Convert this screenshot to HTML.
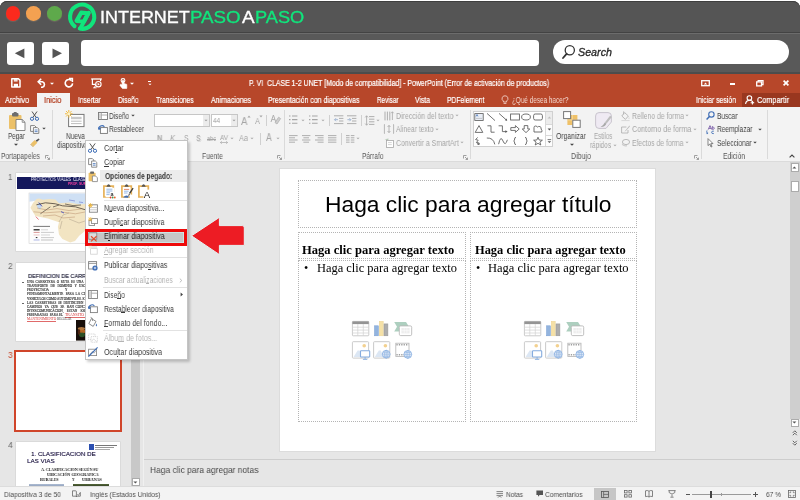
<!DOCTYPE html>
<html>
<head>
<meta charset="utf-8">
<style>
*{box-sizing:border-box;margin:0;padding:0}
html,body{width:800px;height:500px;overflow:hidden;background:#fff;font-family:"Liberation Sans",sans-serif;}
.a{position:absolute}
#root{position:absolute;left:0;top:0;width:800px;height:500px;overflow:hidden;background:#fff}
.t{position:absolute;white-space:pre;line-height:1;transform-origin:0 50%;will-change:transform}
svg{overflow:visible}
</style>
</head>
<body>
<div id="root">
<div class="a" style="left:0px;top:0px;width:800px;height:74px;background:#595959;border-radius:7px 7px 0 0;border-top:1px solid #3f3f3f;top:1px"></div>
<div class="a" style="left:0px;top:1px;width:800px;height:31px;background:#555555;border-radius:7px 7px 0 0;border-top:1px solid #3f3f3f"></div>
<div class="a" style="left:0px;top:32px;width:800px;height:1px;background:#434343;"></div>
<div class="a" style="left:0px;top:33px;width:800px;height:1px;background:#6c6c6c;"></div>
<div class="a" style="left:0px;top:72.4px;width:800px;height:1.6px;background:#4c4c4c;"></div>
<div class="a" style="left:5.500000000000001px;top:6.1000000000000005px;width:14.6px;height:14.6px;border-radius:50%;background:#fb2a1d;box-shadow:0 1px 1px rgba(120,110,100,.7)"></div>
<div class="a" style="left:26.2px;top:6.1000000000000005px;width:14.6px;height:14.6px;border-radius:50%;background:#f4a151;box-shadow:0 1px 1px rgba(120,110,100,.7)"></div>
<div class="a" style="left:47.300000000000004px;top:6.1000000000000005px;width:14.6px;height:14.6px;border-radius:50%;background:#5ea94b;box-shadow:0 1px 1px rgba(120,110,100,.7)"></div>
<svg class="a" style="left:67px;top:2px" width="30" height="30" viewBox="0 0 30 30"><path d="M7.5 24.1 A12.1 12.1 0 1 1 12.8 26.6" fill="none" stroke="#10e57c" stroke-width="4.1" stroke-linecap="round"/>
<path d="M14.2 10.7 L21.3 11.3 L16.9 19.5 L9.6 18.9 Z" fill="none" stroke="#10e57c" stroke-width="4.2" stroke-linejoin="round"/>
<path d="M21.8 10.8 L13.4 26.2" fill="none" stroke="#10e57c" stroke-width="3.9" stroke-linecap="round"/></svg>
<div class="t" style="left:100.20px;top:9.93px;font-size:15.8px;color:#ffffff;font-family:'Liberation Sans',sans-serif;transform:scaleX(1.1367);-webkit-text-stroke:0.32px currentColor;">INTERNET</div>
<div class="t" style="left:190.40px;top:9.93px;font-size:15.8px;color:#10e57c;font-family:'Liberation Sans',sans-serif;transform:scaleX(1.1841);-webkit-text-stroke:0.32px currentColor;">PASO</div>
<div class="t" style="left:241.60px;top:9.93px;font-size:15.8px;color:#ffffff;font-family:'Liberation Sans',sans-serif;transform:scaleX(1.1955);-webkit-text-stroke:0.32px currentColor;">A</div>
<div class="t" style="left:255.20px;top:9.93px;font-size:15.8px;color:#10e57c;font-family:'Liberation Sans',sans-serif;transform:scaleX(1.1513);-webkit-text-stroke:0.32px currentColor;">PASO</div>
<div class="a" style="left:7.3px;top:41.5px;width:27.2px;height:23.6px;background:#fff;border-radius:3px"></div>
<div class="a" style="left:42.2px;top:41.5px;width:27.2px;height:23.6px;background:#fff;border-radius:3px"></div>
<svg class="a" style="left:7px;top:41px" width="63" height="25" viewBox="0 0 63 25"><path d="M7.8 12.2 L17.4 7.6 L17.4 17.2 Z" fill="#555"/><path d="M45.5 7.6 L45.5 17.2 L55 12.2 Z" fill="#555"/></svg>
<div class="a" style="left:80.6px;top:39.6px;width:458.8px;height:26px;background:#fff;border-radius:4px"></div>
<div class="a" style="left:552.6px;top:40.3px;width:236.6px;height:23.5px;background:#fff;border-radius:12px"></div>
<svg class="a" style="left:561px;top:44px" width="16" height="16" viewBox="0 0 16 16"><circle cx="8.8" cy="6.2" r="4.6" fill="none" stroke="#333" stroke-width="1.3"/><path d="M5.6 9.8 L2 14" stroke="#333" stroke-width="1.8" stroke-linecap="round"/></svg>
<div class="t" style="left:578.00px;top:47.11px;font-size:10.5px;color:#2a2a2a;font-family:'Liberation Sans',sans-serif;font-style:italic;transform:scaleX(1.0219);-webkit-text-stroke:0.3px #2a2a2a;">Search</div>
<div class="a" style="left:0px;top:74px;width:800px;height:33px;background:#b7472a;"></div>
<div class="a" style="left:0px;top:107px;width:800px;height:54px;background:#f3f3f3;"></div>
<div class="a" style="left:0px;top:161px;width:800px;height:1px;background:#dbdbdb;"></div>
<div class="a" style="left:0px;top:162px;width:800px;height:326px;background:#e6e6e6;"></div>
<div class="a" style="left:0px;top:488px;width:800px;height:12px;background:#f3f3f3;"></div>
<svg class="a" style="left:11.2px;top:78px" width="10" height="10" viewBox="0 0 10 10"><path d="M0.8 0.8 H7.4 L9 2.4 V9 H0.8 Z" fill="none" stroke="#ffffff" stroke-width="1.5" stroke-linejoin="round"/><rect x="2.8" y="0.8" width="3.8" height="2.8" fill="#ffffff" opacity="0.85"/><rect x="2.8" y="5.8" width="4.2" height="3.2" fill="#ffffff"/></svg>
<svg class="a" style="left:36.6px;top:78.4px" width="10" height="10" viewBox="0 0 10 10"><path d="M1.2 3.8 H5.4 A2.8 2.8 0 0 1 5.4 9.2 H4" fill="none" stroke="#ffffff" stroke-width="1.6"/><path d="M4.2 0.8 L1.2 3.8 L4.2 6.8" fill="none" stroke="#ffffff" stroke-width="1.6"/></svg>
<svg class="a" style="left:49px;top:81.6px" width="6" height="4" viewBox="0 0 6 4"><path d="M1.0199999999999998 0.8 L4.98 0.8 L3 2.7800000000000002 Z" fill="#ffffff"/></svg>
<svg class="a" style="left:63.6px;top:78px" width="10" height="10" viewBox="0 0 10 10"><path d="M7.6 2.6 A3.7 3.7 0 1 0 8.6 5.4" fill="none" stroke="#ffffff" stroke-width="1.6"/><path d="M5 0.6 H8.4 V4" fill="none" stroke="#ffffff" stroke-width="1.5"/></svg>
<svg class="a" style="left:91px;top:78px" width="11" height="10" viewBox="0 0 11 10"><path d="M0.2 1 H10.8" stroke="#ffffff" stroke-width="1.3"/><path d="M1.4 1 V6.4 H5 M9.6 1 V3" fill="none" stroke="#ffffff" stroke-width="1.2"/><circle cx="7.4" cy="6.2" r="2.7" fill="#b7472a" stroke="#ffffff" stroke-width="1.1"/><path d="M6.6 4.8 L8.8 6.2 L6.6 7.6 Z" fill="#ffffff"/><path d="M3.4 9.8 L4.8 6.6 M2.2 9.8 H5.6" stroke="#ffffff" stroke-width="1" fill="none"/></svg>
<svg class="a" style="left:119px;top:77.6px" width="9" height="11" viewBox="0 0 9 11"><circle cx="4" cy="2.5" r="1.9" fill="none" stroke="#ffffff" stroke-width="1.1"/><path d="M3.1 2.6 V7 L1.6 6.2 L0.8 7.2 L3.4 10.4 H7.8 V6.4 L4.9 5.4 V2.6 Z" fill="#ffffff" stroke="#ffffff" stroke-width="0.6" stroke-linejoin="round"/></svg>
<svg class="a" style="left:129px;top:81.6px" width="6" height="4" viewBox="0 0 6 4"><path d="M1.0199999999999998 0.8 L4.98 0.8 L3 2.7800000000000002 Z" fill="#ffffff"/></svg>
<div class="a" style="left:148px;top:80.8px;width:3.2px;height:1.1px;background:#ffffff;"></div>
<svg class="a" style="left:146.6px;top:82.6px" width="6" height="4" viewBox="0 0 6 4"><path d="M1.46 0.8 L4.54 0.8 L3 2.34 Z" fill="#ffffff"/></svg>
<div class="t" style="left:249.00px;top:80.22px;font-size:8.2px;color:#ffffff;font-family:'Liberation Sans',sans-serif;transform:scaleX(0.8460);-webkit-text-stroke:0.2px currentColor;">P. VI  CLASE 1-2 UNET [Modo de compatibilidad] - PowerPoint (Error de activación de productos)</div>
<svg class="a" style="left:701px;top:79.8px" width="9" height="6.4" viewBox="0 0 9 6.4"><rect x="0.7" y="0.7" width="7.6" height="5" fill="none" stroke="#ffffff" stroke-width="1.3"/><path d="M2.8 4.4 L4.5 2.4 L6.2 4.4 Z" fill="#ffffff"/></svg>
<div class="a" style="left:729.8px;top:83px;width:5.4px;height:1.7px;background:#ffffff;"></div>
<svg class="a" style="left:756px;top:79.8px" width="8" height="6.6" viewBox="0 0 8 6.6"><rect x="0.7" y="1.9" width="4.8" height="4" fill="none" stroke="#ffffff" stroke-width="1.3"/><path d="M2.2 1.8 V0.7 H7 V4.6 H5.6" fill="none" stroke="#ffffff" stroke-width="1.3"/></svg>
<svg class="a" style="left:783.4px;top:80.2px" width="6" height="6" viewBox="0 0 6 6"><path d="M0.6 0.6 L5.4 5.4 M5.4 0.6 L0.6 5.4" stroke="#ffffff" stroke-width="1.7"/></svg>
<div class="a" style="left:37px;top:93px;width:33px;height:14.2px;background:#f3f3f3;"></div>
<div class="t" style="left:5.00px;top:96.43px;font-size:8.8px;color:#ffffff;font-family:'Liberation Sans',sans-serif;transform:scaleX(0.8179);-webkit-text-stroke:0.22px currentColor;">Archivo</div>
<div class="t" style="left:44.40px;top:96.43px;font-size:8.8px;color:#b23a1b;font-family:'Liberation Sans',sans-serif;transform:scaleX(0.8372);-webkit-text-stroke:0.22px currentColor;">Inicio</div>
<div class="t" style="left:78.40px;top:96.43px;font-size:8.8px;color:#ffffff;font-family:'Liberation Sans',sans-serif;transform:scaleX(0.7575);-webkit-text-stroke:0.22px currentColor;">Insertar</div>
<div class="t" style="left:118.40px;top:96.43px;font-size:8.8px;color:#ffffff;font-family:'Liberation Sans',sans-serif;transform:scaleX(0.7520);-webkit-text-stroke:0.22px currentColor;">Diseño</div>
<div class="t" style="left:156.40px;top:96.43px;font-size:8.8px;color:#ffffff;font-family:'Liberation Sans',sans-serif;transform:scaleX(0.7586);-webkit-text-stroke:0.22px currentColor;">Transiciones</div>
<div class="t" style="left:211.00px;top:96.43px;font-size:8.8px;color:#ffffff;font-family:'Liberation Sans',sans-serif;transform:scaleX(0.7939);-webkit-text-stroke:0.22px currentColor;">Animaciones</div>
<div class="t" style="left:268.00px;top:96.43px;font-size:8.8px;color:#ffffff;font-family:'Liberation Sans',sans-serif;transform:scaleX(0.7868);-webkit-text-stroke:0.22px currentColor;">Presentación con diapositivas</div>
<div class="t" style="left:376.60px;top:96.43px;font-size:8.8px;color:#ffffff;font-family:'Liberation Sans',sans-serif;transform:scaleX(0.7174);-webkit-text-stroke:0.22px currentColor;">Revisar</div>
<div class="t" style="left:415.00px;top:96.43px;font-size:8.8px;color:#ffffff;font-family:'Liberation Sans',sans-serif;transform:scaleX(0.7730);-webkit-text-stroke:0.22px currentColor;">Vista</div>
<div class="t" style="left:447.00px;top:96.43px;font-size:8.8px;color:#ffffff;font-family:'Liberation Sans',sans-serif;transform:scaleX(0.7647);-webkit-text-stroke:0.22px currentColor;">PDFelement</div>
<svg class="a" style="left:501px;top:95px" width="8" height="10" viewBox="0 0 8 10"><path d="M4 0.8 A2.8 2.8 0 0 1 5.6 6 V7 H2.4 V6 A2.8 2.8 0 0 1 4 0.8 Z M2.6 8.4 H5.4" fill="none" stroke="#f0cfc6" stroke-width="0.9"/></svg>
<div class="t" style="left:511.60px;top:96.43px;font-size:8.8px;color:#f3d6cd;font-family:'Liberation Sans',sans-serif;transform:scaleX(0.7251);">¿Qué desea hacer?</div>
<div class="t" style="left:696.00px;top:96.43px;font-size:8.8px;color:#ffffff;font-family:'Liberation Sans',sans-serif;transform:scaleX(0.7789);-webkit-text-stroke:0.22px currentColor;">Iniciar sesión</div>
<div class="a" style="left:742px;top:93px;width:58px;height:13.6px;background:#99371f;"></div>
<svg class="a" style="left:745px;top:95px" width="10" height="10" viewBox="0 0 10 10"><circle cx="4.4" cy="3" r="2.3" fill="none" stroke="#ffffff" stroke-width="1.1"/><path d="M0.6 9 A3.9 3.9 0 0 1 8.2 8" fill="none" stroke="#ffffff" stroke-width="1.1"/><path d="M7.4 6 V9.6 M5.6 7.8 H9.2" stroke="#ffffff" stroke-width="1.1"/></svg>
<div class="t" style="left:757.00px;top:96.43px;font-size:8.8px;color:#ffffff;font-family:'Liberation Sans',sans-serif;transform:scaleX(0.8284);-webkit-text-stroke:0.22px currentColor;">Compartir</div>
<svg class="a" style="left:8px;top:112px" width="18" height="19" viewBox="0 0 18 19"><rect x="1" y="3" width="12.5" height="14" rx="1" fill="#ecc169"/><rect x="4" y="1" width="6.5" height="3.6" rx="1" fill="#6d6d6d"/><rect x="5.6" y="0" width="3.2" height="2" rx="0.8" fill="#6d6d6d"/>
<path d="M8 7.5 H14.2 L17 10.3 V18.5 H8 Z" fill="#fff" stroke="#7a7a7a" stroke-width="0.9"/><path d="M14.2 7.5 V10.3 H17" fill="none" stroke="#7a7a7a" stroke-width="0.8"/></svg>
<div class="t" style="left:7.60px;top:132.23px;font-size:8.6px;color:#444444;font-family:'Liberation Sans',sans-serif;transform:scaleX(0.7320);">Pegar</div>
<svg class="a" style="left:13px;top:142.6px" width="6" height="4" viewBox="0 0 6 4"><path d="M1.0199999999999998 0.8 L4.98 0.8 L3 2.7800000000000002 Z" fill="#444444"/></svg>
<svg class="a" style="left:30px;top:111px" width="9" height="10" viewBox="0 0 9 10"><path d="M2 0.5 L6.2 6.6 M7 0.5 L2.8 6.6" stroke="#555" stroke-width="1" fill="none"/><circle cx="2" cy="7.8" r="1.6" fill="none" stroke="#3e6db5" stroke-width="1"/><circle cx="7" cy="7.8" r="1.6" fill="none" stroke="#3e6db5" stroke-width="1"/></svg>
<svg class="a" style="left:30px;top:125px" width="10" height="9" viewBox="0 0 10 9"><path d="M0.6 0.6 H4.6 L6 2 V6.4 H0.6 Z" fill="#fff" stroke="#777" stroke-width="0.9"/><path d="M3.4 2.6 H7.4 L8.8 4 V8.4 H3.4 Z" fill="#fff" stroke="#777" stroke-width="0.9"/><path d="M4.6 5 H7.6 M4.6 6.6 H7.6" stroke="#3e6db5" stroke-width="0.8"/></svg>
<svg class="a" style="left:41.4px;top:127.4px" width="6" height="4" viewBox="0 0 6 4"><path d="M1.2399999999999998 0.8 L4.76 0.8 L3 2.5600000000000005 Z" fill="#444444"/></svg>
<svg class="a" style="left:30px;top:138px" width="10" height="9" viewBox="0 0 10 9"><path d="M5.6 2.6 L8.6 0.4 L9.6 1.6 L6.8 4 Z" fill="#555"/><path d="M1 5.4 L4.8 2 L7.4 4.8 L3.6 8.4 Z" fill="#ecc169"/><path d="M0.6 6 L3.2 8.8" stroke="#c99a3c" stroke-width="1"/></svg>
<div class="t" style="left:1.00px;top:152.23px;font-size:8.6px;color:#5a5a5a;font-family:'Liberation Sans',sans-serif;transform:scaleX(0.7695);">Portapapeles</div>
<svg class="a" style="left:44.9px;top:154.5px" width="5" height="5" viewBox="0 0 5 5"><path d="M0.5 3.5 V0.5 H3.5" fill="none" stroke="#8a8a8a" stroke-width="0.8"/><path d="M2 2 L4.5 4.5 M4.5 2.6 V4.5 H2.6" fill="none" stroke="#8a8a8a" stroke-width="0.8"/></svg>
<div class="a" style="left:52px;top:110px;width:1px;height:49px;background:#dadada;"></div>
<svg class="a" style="left:65px;top:110px" width="20" height="18" viewBox="0 0 20 18"><rect x="3.6" y="4.4" width="15.4" height="12.2" fill="#fff" stroke="#777" stroke-width="1"/><rect x="6" y="6.8" width="10.6" height="2.4" fill="#c9c9c9"/><path d="M6 11.2 H16.6 M6 13.6 H16.6" stroke="#b5b5b5" stroke-width="0.9"/>
<path d="M3.8 0 V7.6 M0 3.8 H7.6 M1.1 1.1 L6.5 6.5 M6.5 1.1 L1.1 6.5" stroke="#efb73e" stroke-width="1"/><circle cx="3.8" cy="3.8" r="1.5" fill="#fff3c4"/></svg>
<div class="t" style="left:66.00px;top:132.23px;font-size:8.6px;color:#444444;font-family:'Liberation Sans',sans-serif;transform:scaleX(0.7643);">Nueva</div>
<div class="t" style="left:56.60px;top:141.03px;font-size:8.6px;color:#444444;font-family:'Liberation Sans',sans-serif;transform:scaleX(0.7643);">diapositiva</div>
<svg class="a" style="left:97.6px;top:112px" width="10" height="8" viewBox="0 0 10 8"><rect x="0.5" y="0.5" width="9" height="7" fill="#fff" stroke="#777" stroke-width="0.9"/><path d="M3.4 0.5 V7.5 M3.4 3 H9.5" stroke="#999" stroke-width="0.8"/><rect x="1.2" y="1.4" width="1.6" height="5.2" fill="#c9c9c9"/></svg>
<div class="t" style="left:109.00px;top:111.83px;font-size:8.6px;color:#444444;font-family:'Liberation Sans',sans-serif;transform:scaleX(0.7471);">Diseño</div>
<svg class="a" style="left:129.6px;top:114.4px" width="6" height="4" viewBox="0 0 6 4"><path d="M1.2399999999999998 0.8 L4.76 0.8 L3 2.5600000000000005 Z" fill="#444444"/></svg>
<svg class="a" style="left:97.6px;top:125px" width="10" height="9" viewBox="0 0 10 9"><rect x="2.4" y="2.6" width="7" height="5.8" fill="#fff" stroke="#777" stroke-width="0.9"/><path d="M0.8 4.4 A3.2 3.2 0 0 1 6.4 1.8" fill="none" stroke="#3e6db5" stroke-width="1.1"/><path d="M0 2.2 L0.8 5 L3.4 3.8 Z" fill="#3e6db5"/></svg>
<div class="t" style="left:109.00px;top:125.43px;font-size:8.6px;color:#444444;font-family:'Liberation Sans',sans-serif;transform:scaleX(0.7627);">Restablecer</div>
<div class="a" style="left:153.6px;top:114px;width:56.6px;height:13.4px;background:#fff;border:1px solid #c6c6c6"></div>
<div class="a" style="left:203.4px;top:115px;width:5.8px;height:11.4px;background:#ececec;"></div>
<svg class="a" style="left:203.4px;top:118.8px" width="6" height="4" viewBox="0 0 6 4"><path d="M1.46 0.8 L4.54 0.8 L3 2.34 Z" fill="#999"/></svg>
<div class="a" style="left:211px;top:114px;width:26.8px;height:13.4px;background:#fff;border:1px solid #c6c6c6"></div>
<div class="a" style="left:230.6px;top:115px;width:6.2px;height:11.4px;background:#ececec;"></div>
<svg class="a" style="left:230.8px;top:118.8px" width="6" height="4" viewBox="0 0 6 4"><path d="M1.46 0.8 L4.54 0.8 L3 2.34 Z" fill="#999"/></svg>
<div class="t" style="left:213.20px;top:116.91px;font-size:7.6px;color:#9a9a9a;font-family:'Liberation Sans',sans-serif;transform:scaleX(0.8280);">44</div>
<div class="t" style="left:241.00px;top:115.51px;font-size:10.5px;color:#a6a6a6;font-family:'Liberation Sans',sans-serif;transform:scaleX(0.9138);">A</div>
<svg class="a" style="left:247px;top:115px" width="4" height="3" viewBox="0 0 4 3"><path d="M0.4 2.6 L2 0.6 L3.6 2.6 Z" fill="#a6a6a6"/></svg>
<div class="t" style="left:255.00px;top:116.84px;font-size:9px;color:#a6a6a6;font-family:'Liberation Sans',sans-serif;transform:scaleX(0.8329);">A</div>
<svg class="a" style="left:259.4px;top:115.4px" width="4" height="3" viewBox="0 0 4 3"><path d="M0.4 0.6 L2 2.6 L3.6 0.6 Z" fill="#a6a6a6"/></svg>
<div class="a" style="left:266px;top:115px;width:1px;height:11px;background:#d0d0d0;"></div>
<svg class="a" style="left:270px;top:114px" width="11" height="11" viewBox="0 0 11 11"><path d="M3.4 1 L1 8 M3.4 1 L5.8 8 M1.8 5.6 H5" stroke="#b0b0b0" stroke-width="1" fill="none"/><path d="M5 8.6 L8.6 3.2 L10.6 4.6 L7 10 Z" fill="#cfcfcf" stroke="#aaa" stroke-width="0.7"/></svg>
<div class="t" style="left:157.00px;top:134.43px;font-size:8.6px;color:#a6a6a6;font-family:'Liberation Sans',sans-serif;font-weight:bold;transform:scaleX(0.8695);">N</div>
<div class="t" style="left:170.00px;top:134.43px;font-size:8.6px;color:#a6a6a6;font-family:'Liberation Sans',sans-serif;font-style:italic;transform:scaleX(0.8716);">K</div>
<div class="t" style="left:183.60px;top:134.43px;font-size:8.6px;color:#a6a6a6;font-family:'Liberation Sans',sans-serif;transform:scaleX(0.7670);">S</div>
<div class="a" style="left:183.4px;top:143px;width:5px;height:0.8px;background:#a6a6a6;"></div>
<div class="t" style="left:196.00px;top:134.43px;font-size:8.6px;color:#a6a6a6;font-family:'Liberation Sans',sans-serif;transform:scaleX(0.8019);text-shadow:1px 1px 0 #d5d5d5">S</div>
<div class="t" style="left:207.00px;top:135.21px;font-size:7.4px;color:#a6a6a6;font-family:'Liberation Sans',sans-serif;transform:scaleX(0.7543);">abc</div>
<div class="a" style="left:207px;top:139.2px;width:9px;height:0.7px;background:#a6a6a6;"></div>
<div class="t" style="left:220.00px;top:133.71px;font-size:7.6px;color:#a6a6a6;font-family:'Liberation Sans',sans-serif;transform:scaleX(0.8355);">AV</div>
<svg class="a" style="left:220px;top:141.4px" width="8" height="3" viewBox="0 0 8 3"><path d="M0.4 1.5 H7.6 M1.8 0.2 L0.4 1.5 L1.8 2.8 M6.2 0.2 L7.6 1.5 L6.2 2.8" stroke="#a6a6a6" stroke-width="0.7" fill="none"/></svg>
<svg class="a" style="left:229.4px;top:137px" width="6" height="4" viewBox="0 0 6 4"><path d="M1.46 0.8 L4.54 0.8 L3 2.34 Z" fill="#a6a6a6"/></svg>
<div class="t" style="left:239.00px;top:134.43px;font-size:8.6px;color:#a6a6a6;font-family:'Liberation Sans',sans-serif;transform:scaleX(0.8556);">Aa</div>
<svg class="a" style="left:249px;top:137px" width="6" height="4" viewBox="0 0 6 4"><path d="M1.46 0.8 L4.54 0.8 L3 2.34 Z" fill="#a6a6a6"/></svg>
<div class="a" style="left:259.6px;top:133px;width:1px;height:12px;background:#d0d0d0;"></div>
<div class="t" style="left:265.60px;top:133.35px;font-size:10px;color:#a6a6a6;font-family:'Liberation Sans',sans-serif;transform:scaleX(0.8695);">A</div>
<svg class="a" style="left:274.6px;top:137px" width="6" height="4" viewBox="0 0 6 4"><path d="M1.46 0.8 L4.54 0.8 L3 2.34 Z" fill="#a6a6a6"/></svg>
<div class="t" style="left:202.00px;top:152.23px;font-size:8.6px;color:#5a5a5a;font-family:'Liberation Sans',sans-serif;transform:scaleX(0.7843);">Fuente</div>
<svg class="a" style="left:276.9px;top:154.5px" width="5" height="5" viewBox="0 0 5 5"><path d="M0.5 3.5 V0.5 H3.5" fill="none" stroke="#8a8a8a" stroke-width="0.8"/><path d="M2 2 L4.5 4.5 M4.5 2.6 V4.5 H2.6" fill="none" stroke="#8a8a8a" stroke-width="0.8"/></svg>
<div class="a" style="left:284px;top:110px;width:1px;height:49px;background:#dadada;"></div>
<svg class="a" style="left:289px;top:115px" width="12" height="10" viewBox="0 0 12 10"><path d="M0 1 H1.5 M0 4.6 H1.5 M0 8.2 H1.5 M3 1 H8.4 M3 4.6 H8.4 M3 8.2 H8.4 " stroke="#a6a6a6" stroke-width="1.1" fill="none"/></svg>
<svg class="a" style="left:300px;top:118.6px" width="6" height="4" viewBox="0 0 6 4"><path d="M1.46 0.8 L4.54 0.8 L3 2.34 Z" fill="#a6a6a6"/></svg>
<svg class="a" style="left:309px;top:115px" width="12" height="10" viewBox="0 0 12 10"><path d="M0 1 H1.4 M0 4.6 H1.4 M0 8.2 H1.4 M3 1 H8.6 M3 4.6 H8.6 M3 8.2 H8.6 " stroke="#a6a6a6" stroke-width="1.1" fill="none"/></svg>
<svg class="a" style="left:320px;top:118.6px" width="6" height="4" viewBox="0 0 6 4"><path d="M1.46 0.8 L4.54 0.8 L3 2.34 Z" fill="#a6a6a6"/></svg>
<div class="a" style="left:329px;top:115px;width:1px;height:11px;background:#d0d0d0;"></div>
<svg class="a" style="left:333.6px;top:115px" width="10" height="10" viewBox="0 0 10 10"><path d="M0 0.8 H9.4 M5 3.4 H9.4 M5 6 H9.4 M0 8.6 H9.4" stroke="#a6a6a6" stroke-width="0.9"/><path d="M4 4.7 H0.6 M2 3.2 L0.5 4.7 L2 6.2" stroke="#9ab0cf" stroke-width="0.9" fill="none"/></svg>
<svg class="a" style="left:347px;top:115px" width="10" height="10" viewBox="0 0 10 10"><path d="M0 0.8 H9.4 M5 3.4 H9.4 M5 6 H9.4 M0 8.6 H9.4" stroke="#a6a6a6" stroke-width="0.9"/><path d="M0.4 4.7 H3.8 M2.4 3.2 L3.9 4.7 L2.4 6.2" stroke="#9ab0cf" stroke-width="0.9" fill="none"/></svg>
<div class="a" style="left:360.6px;top:115px;width:1px;height:11px;background:#d0d0d0;"></div>
<svg class="a" style="left:365px;top:114.6px" width="10" height="11" viewBox="0 0 10 11"><path d="M4 1.6 H9.4 M4 4.2 H9.4 M4 6.8 H9.4 M4 9.4 H9.4" stroke="#a6a6a6" stroke-width="0.9"/><path d="M1.6 0.8 V10.2 M0.2 2.4 L1.6 0.8 L3 2.4 M0.2 8.6 L1.6 10.2 L3 8.6" stroke="#a6a6a6" stroke-width="0.8" fill="none"/></svg>
<svg class="a" style="left:375px;top:118.6px" width="6" height="4" viewBox="0 0 6 4"><path d="M1.46 0.8 L4.54 0.8 L3 2.34 Z" fill="#a6a6a6"/></svg>
<svg class="a" style="left:289px;top:135px" width="12" height="10" viewBox="0 0 12 10"><path d="M0 0.6 H8.6 M0 2.8 H6 M0 5 H8.6 M0 7.2 H6 " stroke="#a6a6a6" stroke-width="0.9" fill="none"/></svg>
<svg class="a" style="left:302px;top:135px" width="12" height="10" viewBox="0 0 12 10"><path d="M0 0.6 H8.4 M1.4 2.8 H7 M0 5 H8.4 M1.4 7.2 H7 " stroke="#a6a6a6" stroke-width="0.9" fill="none"/></svg>
<svg class="a" style="left:315px;top:135px" width="12" height="10" viewBox="0 0 12 10"><path d="M0 0.6 H8.6 M2.6 2.8 H8.6 M0 5 H8.6 M2.6 7.2 H8.6 " stroke="#a6a6a6" stroke-width="0.9" fill="none"/></svg>
<svg class="a" style="left:328px;top:135px" width="12" height="10" viewBox="0 0 12 10"><path d="M0 0.6 H8.4 M0 2.8 H8.4 M0 5 H8.4 M0 7.2 H8.4 " stroke="#a6a6a6" stroke-width="0.9" fill="none"/></svg>
<div class="a" style="left:341px;top:133px;width:1px;height:12px;background:#d0d0d0;"></div>
<svg class="a" style="left:346px;top:135px" width="12" height="10" viewBox="0 0 12 10"><path d="M0 0.6 H3.6 M0 2.8 H3.6 M0 5 H3.6 M0 7.2 H3.6 M4.8 0.6 H8.4 M4.8 2.8 H8.4 M4.8 5 H8.4 M4.8 7.2 H8.4 " stroke="#a6a6a6" stroke-width="0.9" fill="none"/></svg>
<svg class="a" style="left:355.4px;top:137px" width="6" height="4" viewBox="0 0 6 4"><path d="M1.46 0.8 L4.54 0.8 L3 2.34 Z" fill="#a6a6a6"/></svg>
<svg class="a" style="left:384px;top:111px" width="10" height="10" viewBox="0 0 10 10"><path d="M1 0.6 V9.4 M3.4 0.6 V9.4 M5.8 0.6 V9.4" stroke="#a6a6a6" stroke-width="0.9"/><path d="M8.4 0.8 V9 M7.2 2.2 L8.4 0.8 L9.6 2.2" stroke="#a6a6a6" stroke-width="0.8" fill="none"/></svg>
<div class="t" style="left:395.60px;top:111.83px;font-size:8.6px;color:#a6a6a6;font-family:'Liberation Sans',sans-serif;transform:scaleX(0.8114);">Dirección del texto</div>
<svg class="a" style="left:453.6px;top:114.4px" width="6" height="4" viewBox="0 0 6 4"><path d="M1.46 0.8 L4.54 0.8 L3 2.34 Z" fill="#a6a6a6"/></svg>
<svg class="a" style="left:384px;top:124.4px" width="10" height="10" viewBox="0 0 10 10"><path d="M1 0.6 H0.4 V9.4 H1 M9 0.6 H9.6 V9.4 H9" stroke="#a6a6a6" stroke-width="0.8" fill="none"/><path d="M5 1.4 V8.6 M3.6 3 L5 1.4 L6.4 3 M3.6 7 L5 8.6 L6.4 7" stroke="#a6a6a6" stroke-width="0.8" fill="none"/></svg>
<div class="t" style="left:395.60px;top:125.43px;font-size:8.6px;color:#a6a6a6;font-family:'Liberation Sans',sans-serif;transform:scaleX(0.7823);">Alinear texto</div>
<svg class="a" style="left:434px;top:128px" width="6" height="4" viewBox="0 0 6 4"><path d="M1.46 0.8 L4.54 0.8 L3 2.34 Z" fill="#a6a6a6"/></svg>
<svg class="a" style="left:384px;top:138px" width="10" height="10" viewBox="0 0 10 10"><path d="M0.6 1.2 L4.6 0.4 L4.2 2.6 Z" fill="#b8cbb8"/><rect x="2.4" y="2.4" width="7" height="7" fill="#fff" stroke="#a6a6a6" stroke-width="0.8"/><path d="M4 4.6 H7.8 M4 6.6 H7.8" stroke="#c4c4c4" stroke-width="0.7"/></svg>
<div class="t" style="left:395.60px;top:138.83px;font-size:8.6px;color:#a6a6a6;font-family:'Liberation Sans',sans-serif;transform:scaleX(0.8013);">Convertir a SmartArt</div>
<svg class="a" style="left:459px;top:141.4px" width="6" height="4" viewBox="0 0 6 4"><path d="M1.46 0.8 L4.54 0.8 L3 2.34 Z" fill="#a6a6a6"/></svg>
<div class="t" style="left:361.60px;top:152.23px;font-size:8.6px;color:#5a5a5a;font-family:'Liberation Sans',sans-serif;transform:scaleX(0.7588);">Párrafo</div>
<svg class="a" style="left:462.5px;top:154.5px" width="5" height="5" viewBox="0 0 5 5"><path d="M0.5 3.5 V0.5 H3.5" fill="none" stroke="#8a8a8a" stroke-width="0.8"/><path d="M2 2 L4.5 4.5 M4.5 2.6 V4.5 H2.6" fill="none" stroke="#8a8a8a" stroke-width="0.8"/></svg>
<div class="a" style="left:469.6px;top:110px;width:1px;height:49px;background:#dadada;"></div>
<div class="a" style="left:473px;top:111px;width:80px;height:36.4px;background:#fff;border:1px solid #d0d0d0"></div>
<div class="a" style="left:545.4px;top:112px;width:6.8px;height:11.6px;background:#ececec;border-left:1px solid #d8d8d8"></div>
<div class="a" style="left:545.4px;top:123.6px;width:6.8px;height:11.8px;background:#fdfdfd;border-left:1px solid #d8d8d8;border-top:1px solid #d8d8d8"></div>
<div class="a" style="left:545.4px;top:135.4px;width:6.8px;height:11px;background:#fdfdfd;border-left:1px solid #d8d8d8;border-top:1px solid #d8d8d8"></div>
<svg class="a" style="left:546.6px;top:116px" width="5" height="3" viewBox="0 0 5 3"><path d="M0.6 2.4 L2.4 0.6 L4.2 2.4 Z" fill="#c0c0c0"/></svg>
<svg class="a" style="left:546.6px;top:128.4px" width="5" height="3" viewBox="0 0 5 3"><path d="M0.6 0.6 L2.4 2.4 L4.2 0.6 Z" fill="#555"/></svg>
<svg class="a" style="left:546.6px;top:138.6px" width="5" height="5" viewBox="0 0 5 5"><path d="M0.6 0.6 H4.2" stroke="#555" stroke-width="0.8"/><path d="M0.6 2.2 L2.4 4 L4.2 2.2 Z" fill="#555"/></svg>
<svg class="a" style="left:474px;top:113px" width="10" height="8" viewBox="0 0 10 8"><rect x="0.8" y="0.6" width="8.4" height="6.8" fill="#e9eef6" stroke="#595959" stroke-width="0.8"/><path d="M2 3.4 L3 1.4 L4 3.4 M2.4 2.7 H3.6" stroke="#3e6db5" stroke-width="0.6" fill="none"/><path d="M2 5.4 H8" stroke="#9a9a9a" stroke-width="0.5"/></svg>
<svg class="a" style="left:486px;top:113px" width="10" height="8" viewBox="0 0 10 8"><path d="M1 0.4 L9 7.6" fill="none" stroke="#595959" stroke-width="0.85"/></svg>
<svg class="a" style="left:498px;top:113px" width="10" height="8" viewBox="0 0 10 8"><path d="M1 0.4 L8.6 7.2" fill="none" stroke="#595959" stroke-width="0.85"/><path d="M9.2 7.8 L6.8 7.2 L8.6 5.4 Z" fill="#595959"/></svg>
<svg class="a" style="left:509.6px;top:113px" width="10" height="8" viewBox="0 0 10 8"><rect x="0.6" y="1" width="8.8" height="6" fill="none" stroke="#595959" stroke-width="0.85"/></svg>
<svg class="a" style="left:521px;top:113px" width="10" height="8" viewBox="0 0 10 8"><ellipse cx="5" cy="4" rx="4.4" ry="3" fill="none" stroke="#595959" stroke-width="0.85"/></svg>
<svg class="a" style="left:533px;top:113px" width="10" height="8" viewBox="0 0 10 8"><rect x="0.6" y="1" width="8.8" height="6" rx="1.6" fill="none" stroke="#595959" stroke-width="0.85"/></svg>
<svg class="a" style="left:474px;top:125px" width="10" height="8" viewBox="0 0 10 8"><path d="M5 0.6 L8.8 7.4 H1.2 Z" fill="none" stroke="#595959" stroke-width="0.85"/></svg>
<svg class="a" style="left:486px;top:125px" width="10" height="8" viewBox="0 0 10 8"><path d="M1.4 0.8 H5 V7.2 H8.6" fill="none" stroke="#595959" stroke-width="0.85"/></svg>
<svg class="a" style="left:498px;top:125px" width="10" height="8" viewBox="0 0 10 8"><path d="M0.6 0.8 H4.4 V6.6 H8" fill="none" stroke="#595959" stroke-width="0.85"/><path d="M9.6 6.6 L7.4 5.2 V8 Z" fill="#595959"/></svg>
<svg class="a" style="left:509.6px;top:125px" width="10" height="8" viewBox="0 0 10 8"><path d="M0.8 2.6 H5.4 V0.6 L9.2 4 L5.4 7.4 V5.4 H0.8 Z" fill="none" stroke="#595959" stroke-width="0.85"/></svg>
<svg class="a" style="left:521px;top:125px" width="10" height="8" viewBox="0 0 10 8"><path d="M3.2 0.6 H6.8 V4 H8.8 L5 7.6 L1.2 4 H3.2 Z" fill="none" stroke="#595959" stroke-width="0.85"/></svg>
<svg class="a" style="left:533px;top:125px" width="10" height="8" viewBox="0 0 10 8"><path d="M1 7 V2.6 Q1 1 2.6 1 Q4 1 4.4 2.2 Q5.4 1 7 1.6 Q8.8 2.4 8 4 Q9.4 5 8.8 7 Z" fill="none" stroke="#595959" stroke-width="0.85"/></svg>
<svg class="a" style="left:474px;top:137px" width="10" height="8" viewBox="0 0 10 8"><path d="M3.6 0.4 L1.6 2.6 L4.2 3.2 L2.4 5.6 L5.2 6 L4 7.6 M4 7.6 L6 6.8 M4 7.6 L3.6 5.6" fill="none" stroke="#595959" stroke-width="0.85"/></svg>
<svg class="a" style="left:486px;top:137px" width="10" height="8" viewBox="0 0 10 8"><path d="M0.8 1 Q7.4 0.6 8.8 7.4" fill="none" stroke="#595959" stroke-width="0.85"/></svg>
<svg class="a" style="left:498px;top:137px" width="10" height="8" viewBox="0 0 10 8"><path d="M0.6 7.2 Q2.6 -2.2 5 4 Q7.2 9.8 9.4 2.8" fill="none" stroke="#595959" stroke-width="0.85"/></svg>
<svg class="a" style="left:509.6px;top:137px" width="10" height="8" viewBox="0 0 10 8"><path d="M6 0.4 Q4.4 0.4 4.6 2 Q4.8 3.8 3.6 4 Q4.8 4.2 4.6 6 Q4.4 7.6 6 7.6" fill="none" stroke="#595959" stroke-width="0.85"/></svg>
<svg class="a" style="left:521px;top:137px" width="10" height="8" viewBox="0 0 10 8"><path d="M4 0.4 Q5.6 0.4 5.4 2 Q5.2 3.8 6.4 4 Q5.2 4.2 5.4 6 Q5.6 7.6 4 7.6" fill="none" stroke="#595959" stroke-width="0.85"/></svg>
<svg class="a" style="left:533px;top:137px" width="10" height="8" viewBox="0 0 10 8"><path d="M5 0.2 L6.2 3 L9.4 3.2 L6.9 5.1 L7.8 8 L5 6.3 L2.2 8 L3.1 5.1 L0.6 3.2 L3.8 3 Z" fill="none" stroke="#595959" stroke-width="0.85"/></svg>
<svg class="a" style="left:563px;top:111.4px" width="18" height="17" viewBox="0 0 18 17"><rect x="4.4" y="4" width="10" height="10" fill="#efc168"/><path d="M9.4 4 V14 M4.4 9 H14.4" stroke="#f6dca6" stroke-width="0.8"/><rect x="0.6" y="0.6" width="7" height="7" fill="#fff" stroke="#777" stroke-width="1"/><rect x="9.8" y="9.2" width="7.4" height="7.2" fill="#fff" stroke="#777" stroke-width="1"/></svg>
<div class="t" style="left:556.40px;top:132.23px;font-size:8.6px;color:#444444;font-family:'Liberation Sans',sans-serif;transform:scaleX(0.7945);">Organizar</div>
<svg class="a" style="left:568.6px;top:142.6px" width="6" height="4" viewBox="0 0 6 4"><path d="M1.0199999999999998 0.8 L4.98 0.8 L3 2.7800000000000002 Z" fill="#444444"/></svg>
<svg class="a" style="left:595px;top:112px" width="18" height="18" viewBox="0 0 18 18"><path d="M4 0.6 H13 Q16.4 0.6 16.4 4 V10 L11 16.4 H4 Q0.6 16.4 0.6 13 V4 Q0.6 0.6 4 0.6 Z" fill="#efeaf3" stroke="#c4c0c8" stroke-width="0.9"/><path d="M16.8 5 L11.6 11.6 L9.8 10.4 L15 3.8 Z" fill="#bdbdbd"/><path d="M9.8 10.6 L11.4 11.8 Q9.4 15.4 5.6 15 Q8.4 13.6 9.8 10.6 Z" fill="#a8a8a8"/></svg>
<div class="t" style="left:593.60px;top:132.23px;font-size:8.6px;color:#a6a6a6;font-family:'Liberation Sans',sans-serif;transform:scaleX(0.7264);">Estilos</div>
<div class="t" style="left:590.00px;top:141.03px;font-size:8.6px;color:#a6a6a6;font-family:'Liberation Sans',sans-serif;transform:scaleX(0.7445);">rápidos</div>
<svg class="a" style="left:612.4px;top:143.6px" width="6" height="4" viewBox="0 0 6 4"><path d="M1.46 0.8 L4.54 0.8 L3 2.34 Z" fill="#a6a6a6"/></svg>
<svg class="a" style="left:621px;top:111px" width="9" height="10" viewBox="0 0 9 10"><path d="M3.6 1.6 L7.4 5 L4.4 8.4 L0.8 5 Z" fill="#f3f3f3" stroke="#ababab" stroke-width="0.8"/><path d="M2.6 0.4 V3.4" stroke="#ababab" stroke-width="0.8"/><path d="M8 6 Q9 7.6 8 8.2 Q7 7.6 8 6 Z" fill="#c9c9c9"/><path d="M0.4 9.6 H8.6" stroke="#d8d8d8" stroke-width="1"/></svg>
<div class="t" style="left:631.60px;top:111.83px;font-size:8.6px;color:#a6a6a6;font-family:'Liberation Sans',sans-serif;transform:scaleX(0.7940);">Relleno de forma</div>
<svg class="a" style="left:684.2px;top:114.4px" width="6" height="4" viewBox="0 0 6 4"><path d="M1.46 0.8 L4.54 0.8 L3 2.34 Z" fill="#a6a6a6"/></svg>
<svg class="a" style="left:621px;top:125px" width="9" height="9" viewBox="0 0 9 9"><path d="M0.6 2 H5.4 M0.6 2 V8 H7 V5" fill="none" stroke="#ababab" stroke-width="0.8"/><path d="M8.4 0.6 L4.4 5.4 L3.4 6.6 L4.8 6 L8.9 1.4 Z" fill="#bdbdbd"/></svg>
<div class="t" style="left:631.60px;top:125.43px;font-size:8.6px;color:#a6a6a6;font-family:'Liberation Sans',sans-serif;transform:scaleX(0.8284);">Contorno de forma</div>
<svg class="a" style="left:691.6px;top:128px" width="6" height="4" viewBox="0 0 6 4"><path d="M1.46 0.8 L4.54 0.8 L3 2.34 Z" fill="#a6a6a6"/></svg>
<svg class="a" style="left:621px;top:139px" width="9" height="8" viewBox="0 0 9 8"><ellipse cx="5" cy="3" rx="3.6" ry="2.6" fill="#f3f3f3" stroke="#ababab" stroke-width="0.8"/><path d="M1.2 4.8 Q2 7.4 6 6.6" fill="none" stroke="#cdcdcd" stroke-width="1.2"/></svg>
<div class="t" style="left:631.60px;top:138.83px;font-size:8.6px;color:#a6a6a6;font-family:'Liberation Sans',sans-serif;transform:scaleX(0.7907);">Efectos de forma</div>
<svg class="a" style="left:684.2px;top:141.4px" width="6" height="4" viewBox="0 0 6 4"><path d="M1.46 0.8 L4.54 0.8 L3 2.34 Z" fill="#a6a6a6"/></svg>
<div class="t" style="left:571.00px;top:152.23px;font-size:8.6px;color:#5a5a5a;font-family:'Liberation Sans',sans-serif;transform:scaleX(0.8203);">Dibujo</div>
<svg class="a" style="left:693.9px;top:154.5px" width="5" height="5" viewBox="0 0 5 5"><path d="M0.5 3.5 V0.5 H3.5" fill="none" stroke="#8a8a8a" stroke-width="0.8"/><path d="M2 2 L4.5 4.5 M4.5 2.6 V4.5 H2.6" fill="none" stroke="#8a8a8a" stroke-width="0.8"/></svg>
<div class="a" style="left:701px;top:110px;width:1px;height:49px;background:#dadada;"></div>
<svg class="a" style="left:706px;top:111.4px" width="9" height="9" viewBox="0 0 9 9"><circle cx="5.4" cy="3.4" r="2.7" fill="none" stroke="#3e6db5" stroke-width="1.1"/><path d="M3.4 5.4 L0.6 8.4" stroke="#3e6db5" stroke-width="1.4"/></svg>
<div class="t" style="left:717.00px;top:111.83px;font-size:8.6px;color:#444444;font-family:'Liberation Sans',sans-serif;transform:scaleX(0.7621);">Buscar</div>
<svg class="a" style="left:705.6px;top:124.6px" width="10" height="10" viewBox="0 0 10 10"><path d="M4 0.6 L5.8 4.6 M4 0.6 L2.2 4.6 M2.8 3.4 H5.2" stroke="#7b5fa8" stroke-width="0.9" fill="none"/><path d="M1 5.4 Q0 7.4 1.6 8.6 M1.6 8.6 L0.4 8.6 M1.6 8.6 V7.4" stroke="#3e6db5" stroke-width="0.8" fill="none"/><path d="M7.8 6.2 Q6 5.6 5.6 7.2 Q5.6 9 7.8 8.6" stroke="#3e6db5" stroke-width="0.9" fill="none"/><path d="M6.4 1 V4.4 Q8.6 4.4 8.4 3 Q8.2 2 6.4 2.2" stroke="#7b5fa8" stroke-width="0.8" fill="none"/></svg>
<div class="t" style="left:717.00px;top:125.43px;font-size:8.6px;color:#444444;font-family:'Liberation Sans',sans-serif;transform:scaleX(0.7635);">Reemplazar</div>
<svg class="a" style="left:757px;top:128px" width="6" height="4" viewBox="0 0 6 4"><path d="M1.2399999999999998 0.8 L4.76 0.8 L3 2.5600000000000005 Z" fill="#444444"/></svg>
<svg class="a" style="left:707px;top:138.4px" width="7" height="10" viewBox="0 0 7 10"><path d="M1 0.6 V7.6 L2.8 6 L4 9 L5 8.6 L3.8 5.6 H6 Z" fill="#fff" stroke="#666" stroke-width="0.8" stroke-linejoin="round"/></svg>
<div class="t" style="left:717.00px;top:138.83px;font-size:8.6px;color:#444444;font-family:'Liberation Sans',sans-serif;transform:scaleX(0.7700);">Seleccionar</div>
<svg class="a" style="left:752.4px;top:141.4px" width="6" height="4" viewBox="0 0 6 4"><path d="M1.2399999999999998 0.8 L4.76 0.8 L3 2.5600000000000005 Z" fill="#444444"/></svg>
<div class="t" style="left:723.00px;top:152.43px;font-size:8.6px;color:#5a5a5a;font-family:'Liberation Sans',sans-serif;transform:scaleX(0.7799);">Edición</div>
<div class="a" style="left:767px;top:110px;width:1px;height:49px;background:#dadada;"></div>
<svg class="a" style="left:788.6px;top:154.4px" width="6" height="4" viewBox="0 0 6 4"><path d="M0.6 3.4 L3 1 L5.4 3.4" fill="none" stroke="#444" stroke-width="1.1"/></svg>
<div class="a" style="left:131px;top:162px;width:9.4px;height:326px;background:#c8c8c8;"></div>
<div class="a" style="left:143px;top:162px;width:1px;height:326px;background:#f0f0f0;"></div>
<div class="a" style="left:131.6px;top:477.8px;width:8.4px;height:8.4px;background:#fff;border:1px solid #ababab"></div>
<svg class="a" style="left:133.4px;top:480.6px" width="5" height="3" viewBox="0 0 5 3"><path d="M0.4 0.4 L2.4 2.6 L4.4 0.4 Z" fill="#555"/></svg>
<div class="t" style="left:8.00px;top:171.59px;font-size:9.5px;color:#6a6a6a;font-family:'Liberation Sans',sans-serif;transform:scaleX(0.8328);">1</div>
<div class="t" style="left:8.00px;top:260.79px;font-size:9.5px;color:#6a6a6a;font-family:'Liberation Sans',sans-serif;transform:scaleX(0.8706);">2</div>
<div class="t" style="left:8.00px;top:349.99px;font-size:9.5px;color:#c8492c;font-family:'Liberation Sans',sans-serif;transform:scaleX(0.8706);">3</div>
<div class="t" style="left:8.00px;top:439.79px;font-size:9.5px;color:#6a6a6a;font-family:'Liberation Sans',sans-serif;transform:scaleX(0.9085);">4</div>
<div class="a" style="left:15.6px;top:172.8px;width:104.6px;height:78.4px;background:#fff;box-shadow:0 0 0 0.6px #d2d2d2"></div>
<div class="a" style="left:16.8px;top:176.6px;width:102.4px;height:12.4px;background:#14185c;"></div>
<div class="t" style="left:31.30px;top:177.97px;font-size:4.6px;color:#f4f4ff;font-family:'Liberation Sans',sans-serif;transform:scaleX(0.8660);">PROYECTOS VIALES</div>
<div class="t" style="left:73.40px;top:177.97px;font-size:4.6px;color:#f4f4ff;font-family:'Liberation Sans',sans-serif;transform:scaleX(0.8660);">CLASE 1-2</div>
<div class="t" style="left:67.80px;top:183.35px;font-size:3.4px;color:#ff3fa4;font-family:'Liberation Sans',sans-serif;font-weight:bold;">PROF. SUR MARIA</div>
<svg class="a" style="left:28.6px;top:193.2px" width="82" height="50.6" viewBox="0 0 82 50.6"><rect x="0" y="0" width="82" height="50.6" fill="#fdfdfd" stroke="#d0d0d0" stroke-width="0.6"/>
<path d="M0.4 0.4 H81.6 V13 L30 11 L26 7.4 L8 7.4 L0.4 8.8 Z" fill="#cfe0f4"/>
<path d="M1.4 14.8 L4 10 L7.6 6 L10 5.4 L14 6.8 L20 6 L26.4 6.4 L30 10.3 L40 9.6 L51.4 11.4 L60 10.6 L81.6 12 V38 L56 38 L50.2 42.8 L46 48 L41.2 49.5 L33.4 46.1 L30 41.6 L28.9 33.8 L30 29.3 L18.8 25.4 L6.4 23.1 Z" fill="#f2e4c2"/>
<ellipse cx="10.2" cy="13.4" rx="1.9" ry="3.1" transform="rotate(-18 10.2 13.4)" fill="#c3d8f3"/>
<path d="M9.8 9.6 L13 13.4" stroke="#3a45c0" stroke-width="0.9"/>
<path d="M7.4 11.8 L16.4 9.8 L26.4 10.8 L33.4 12.8 L46.4 13.8 L56.4 16.8" fill="none" stroke="#4a4038" stroke-width="1" opacity="0.8"/>
<path d="M11.4 20.8 L21.4 13.8 M24 14 L30 12 M36 11 L44 12.6 L52 12" fill="none" stroke="#3d3530" stroke-width="0.9" opacity="0.7"/>
<path d="M4.4 18.8 L16.4 19.8 L31.4 18.8 L46.4 20.8 L56 19 M8 15 L18 17 L28 15.6 L40 17.6 L52 16 M14 23 L26 22 L34 25 L46 24" fill="none" stroke="#b58a68" stroke-width="0.6" opacity="0.8"/>
<path d="M30 29 L34 22 L40 20 M33 28 L31 36 M40 26 L50 30 L56 28" fill="none" stroke="#9a8a78" stroke-width="0.5" opacity="0.8"/>
<path d="M32 18.6 L35 20" stroke="#3a45c0" stroke-width="0.8"/><path d="M40 7 L46 8 M50 9 L54 9.6" stroke="#5560c8" stroke-width="0.7" opacity="0.7"/>
<path d="M6.8 23.6 L9.6 26.6" stroke="#e0404a" stroke-width="0.7"/>
<path d="M4.4 33.4 H21" stroke="#555" stroke-width="0.8"/>
<path d="M4.6 36.8 H10.6" stroke="#222" stroke-width="1.3"/><path d="M12 36.8 H19" stroke="#aaa" stroke-width="0.5"/>
<path d="M4.6 39.4 H10.6" stroke="#c0504d" stroke-width="0.6"/><path d="M12 39.4 H25" stroke="#999" stroke-width="0.5"/>
<path d="M4.6 42 H10.6" stroke="#e6a0a0" stroke-width="0.6"/><path d="M12 42 H21" stroke="#aaa" stroke-width="0.5"/>
<path d="M6.8 44.6 H8.4" stroke="#222" stroke-width="1"/><path d="M12 44.6 H25" stroke="#999" stroke-width="0.5"/>
<path d="M4.6 47 H10.6" stroke="#7a88d8" stroke-width="0.6"/><path d="M12 47 H24" stroke="#888" stroke-width="0.5"/></svg>
<div class="a" style="left:15.6px;top:262.6px;width:104.6px;height:78.4px;background:#fff;box-shadow:0 0 0 0.6px #d2d2d2"></div>
<div class="t" style="left:28.40px;top:273.29px;font-size:6px;color:#1a1a1a;font-family:'Liberation Sans',sans-serif;transform:scaleX(0.9144);text-shadow:0.5px 0.4px 0 #8a8ac0">DEFINICION DE CARRETERA</div>
<div class="t" style="left:26.60px;top:280.80px;font-size:3.3px;color:#2e2e2e;font-family:'Liberation Serif',serif;-webkit-text-stroke:0.12px #2e2e2e;">UNA  CARRETERA  O  RUTA  ES  UNA  VIA  DE</div>
<div class="t" style="left:26.60px;top:285.00px;font-size:3.3px;color:#2e2e2e;font-family:'Liberation Serif',serif;-webkit-text-stroke:0.12px #2e2e2e;">TRANSPORTE   DE   DOMINIO   Y   USO</div>
<div class="t" style="left:26.60px;top:289.20px;font-size:3.3px;color:#2e2e2e;font-family:'Liberation Serif',serif;-webkit-text-stroke:0.12px #2e2e2e;">PROYECTADA                    Y</div>
<div class="t" style="left:26.60px;top:293.40px;font-size:3.3px;color:#2e2e2e;font-family:'Liberation Serif',serif;-webkit-text-stroke:0.12px #2e2e2e;">FUNDAMENTALMENTE   PARA  LA  CIRCULACION</div>
<div class="t" style="left:26.60px;top:297.50px;font-size:3.3px;color:#2e2e2e;font-family:'Liberation Serif',serif;-webkit-text-stroke:0.12px #2e2e2e;">VEHICULOS COMO AUTOMOVILES. EXISTEN</div>
<div class="t" style="left:26.60px;top:301.80px;font-size:3.3px;color:#2e2e2e;font-family:'Liberation Serif',serif;-webkit-text-stroke:0.12px #2e2e2e;">LAS  CARRETERAS  SE  DISTINGUEN  DE  LOS</div>
<div class="t" style="left:26.60px;top:305.90px;font-size:3.3px;color:#2e2e2e;font-family:'Liberation Serif',serif;-webkit-text-stroke:0.12px #2e2e2e;">CAMINOS   YA   QUE   SE   HAN  CONCEBIDO</div>
<div class="t" style="left:26.60px;top:310.10px;font-size:3.3px;color:#2e2e2e;font-family:'Liberation Serif',serif;-webkit-text-stroke:0.12px #2e2e2e;">INTERCOMUNICACION,    ESTAN    ESPECIALMENTE</div>
<div class="t" style="left:26.60px;top:314.20px;font-size:3.3px;color:#2e2e2e;font-family:'Liberation Serif',serif;-webkit-text-stroke:0.12px #2e2e2e;">PREPARADAS  PARA EL </div>
<div class="t" style="left:65.00px;top:314.20px;font-size:3.3px;color:#d03030;font-family:'Liberation Serif',serif;transform:scaleX(1.1687);">TRANSITO</div>
<div class="a" style="left:65px;top:317.3px;width:20px;height:0.5px;background:#e06a6a;"></div>
<div class="t" style="left:26.60px;top:318.30px;font-size:3.3px;color:#d03030;font-family:'Liberation Serif',serif;transform:scaleX(1.0505);">MANTENIMIENTO</div>
<div class="a" style="left:26.6px;top:321.4px;width:29.4px;height:0.5px;background:#e06a6a;"></div>
<div class="t" style="left:57.40px;top:318.30px;font-size:3.3px;color:#3a3a3a;font-family:'Liberation Serif',serif;transform:scaleX(0.9369);">REGULAR</div>
<div class="a" style="left:22.4px;top:281.8px;width:1.2px;height:1.2px;background:#555;border-radius:50%"></div>
<div class="a" style="left:22.4px;top:302.8px;width:1.2px;height:1.2px;background:#555;border-radius:50%"></div>
<svg class="a" style="left:75.6px;top:320px" width="40" height="20.6" viewBox="0 0 40 20.6"><rect width="40" height="20.6" fill="#170e09"/><ellipse cx="5.4" cy="8.6" rx="3.6" ry="1.6" fill="#c98a4a" opacity="0.85"/><ellipse cx="6.6" cy="11.4" rx="3" ry="1.8" fill="#d8792a" opacity="0.8"/><ellipse cx="6" cy="14.8" rx="3" ry="2.4" fill="#2f5a2a" opacity="0.85"/><ellipse cx="3" cy="12" rx="1.2" ry="3" fill="#5a2a14" opacity="0.8"/></svg>
<div class="a" style="left:14.2px;top:350.4px;width:107.4px;height:81.6px;background:#fff;border:2px solid #d0452a"></div>
<div class="a" style="left:15.6px;top:441.8px;width:104.6px;height:47px;background:#fff;box-shadow:0 0 0 0.6px #d2d2d2"></div>
<div class="t" style="left:31.00px;top:450.79px;font-size:6.2px;color:#1c1c2a;font-family:'Liberation Sans',sans-serif;text-shadow:0.4px 0.3px 0 #9a8ad0">1. CLASIFICACION DE</div>
<div class="t" style="left:26.80px;top:457.99px;font-size:6.2px;color:#1c1c2a;font-family:'Liberation Sans',sans-serif;text-shadow:0.4px 0.3px 0 #9a8ad0">LAS VIAS</div>
<div class="a" style="left:89.4px;top:444.4px;width:5px;height:5.4px;background:#2b4fb0;"></div>
<div class="a" style="left:95.4px;top:444.6px;width:22px;height:1px;background:#777;"></div>
<div class="a" style="left:95.4px;top:446.6px;width:19px;height:0.8px;background:#999;"></div>
<div class="a" style="left:95.4px;top:448.6px;width:15px;height:0.8px;background:#aaa;"></div>
<div class="t" style="left:41.40px;top:467.82px;font-size:4.5px;color:#111;font-family:'Liberation Serif',serif;font-weight:bold;transform:scaleX(0.8731);">A. CLASIFICACION SEGÚN SU</div>
<div class="t" style="left:47.00px;top:472.52px;font-size:4.5px;color:#111;font-family:'Liberation Serif',serif;font-weight:bold;transform:scaleX(0.8839);">UBICACIÓN GEOGRAFICA</div>
<div class="t" style="left:40.40px;top:477.62px;font-size:4.5px;color:#111;font-family:'Liberation Serif',serif;font-weight:bold;transform:scaleX(0.8649);">RURALES</div>
<div class="t" style="left:72.40px;top:477.62px;font-size:4.5px;color:#111;font-family:'Liberation Serif',serif;font-weight:bold;transform:scaleX(0.8000);">Y</div>
<div class="t" style="left:81.60px;top:477.62px;font-size:4.5px;color:#111;font-family:'Liberation Serif',serif;font-weight:bold;transform:scaleX(0.9102);">URBANAS</div>
<div class="a" style="left:28.6px;top:483.6px;width:35.2px;height:5px;background:#8b9db8;background:linear-gradient(#aebcd2,#6f84a6)"></div>
<div class="a" style="left:72.8px;top:483.6px;width:36px;height:5px;background:#1d2a14;background:linear-gradient(#55683a,#10160c)"></div>
<div class="a" style="left:279.5px;top:168.6px;width:375.6px;height:282.6px;background:#fff;box-shadow:0 0 0 1px #dcdcdc"></div>
<div class="a" style="left:298px;top:180.4px;width:339.4px;height:48px;border:1px dotted #b4b4b4"></div>
<div class="t" style="left:324.80px;top:193.10px;font-size:22.8px;color:#000;font-family:'Liberation Sans',sans-serif;">Haga clic para agregar título</div>
<div class="a" style="left:298px;top:232.4px;width:167.8px;height:27px;border:1px dotted #b4b4b4"></div>
<div class="a" style="left:298px;top:260px;width:167.8px;height:162.4px;border:1px dotted #b4b4b4"></div>
<div class="a" style="left:470.4px;top:232.4px;width:167px;height:27px;border:1px dotted #b4b4b4"></div>
<div class="a" style="left:470.4px;top:260px;width:167px;height:162.4px;border:1px dotted #b4b4b4"></div>
<div class="t" style="left:302.40px;top:244.20px;font-size:12px;color:#000;font-family:'Liberation Serif',serif;font-weight:bold;transform:scaleX(1.0459);">Haga clic para agregar texto</div>
<div class="t" style="left:474.60px;top:244.20px;font-size:12px;color:#000;font-family:'Liberation Serif',serif;font-weight:bold;transform:scaleX(1.0349);">Haga clic para agregar texto</div>
<div class="t" style="left:304.20px;top:262.40px;font-size:12px;color:#000;font-family:'Liberation Serif',serif;">•</div>
<div class="t" style="left:317.00px;top:262.40px;font-size:12px;color:#000;font-family:'Liberation Serif',serif;transform:scaleX(1.0351);">Haga clic para agregar texto</div>
<div class="t" style="left:476.00px;top:262.40px;font-size:12px;color:#000;font-family:'Liberation Serif',serif;">•</div>
<div class="t" style="left:488.20px;top:262.40px;font-size:12px;color:#000;font-family:'Liberation Serif',serif;transform:scaleX(1.0396);">Haga clic para agregar texto</div>
<svg class="a" style="left:351.8px;top:321.2px" width="62" height="40" viewBox="0 0 62 40"><g opacity="0.95">
<rect x="0.4" y="0.4" width="16.4" height="14.4" rx="0.8" fill="#fff" stroke="#c2c2c2" stroke-width="0.9"/><rect x="0.4" y="0.4" width="16.4" height="2.7" fill="#8f8f8f"/><path d="M0.4 6.2 H16.8 M0.4 9.1 H16.8 M0.4 12 H16.8 M5.8 3 V14.8 M11.3 3 V14.8" stroke="#d0d0d0" stroke-width="0.7"/>
<rect x="22.5" y="4.8" width="3.9" height="10" fill="#8eb0dd" stroke="#6f97cf" stroke-width="0.5"/><rect x="27.3" y="0.3" width="3.9" height="14.5" fill="#f5e0a3" stroke="#ecd08a" stroke-width="0.5"/><rect x="32" y="2.9" width="3.9" height="11.9" fill="#a9a9a9" stroke="#8f8f8f" stroke-width="0.5"/>
<path d="M42.2 0.9 H54 L57 5.7 L54 10.4 H42.2 L45 5.7 Z" fill="#a9cdbc"/><rect x="47.3" y="4.9" width="12.4" height="9.7" rx="1.4" fill="#fff" stroke="#b5b5b5" stroke-width="0.9"/><rect x="49.4" y="7" width="8.2" height="5.4" fill="#ededed"/><path d="M52.2 7 V12.4 M54.9 7 V12.4 M49.4 9.7 H57.6" stroke="#fff" stroke-width="0.5"/>
<rect x="0.4" y="20.7" width="16.2" height="16.4" rx="0.8" fill="#fff" stroke="#c2c2c2" stroke-width="0.9"/><path d="M1.6 36 L5.6 29.4 L7.6 29.4 L10.6 36 Z" fill="#dbe6f4"/><circle cx="12.2" cy="24.8" r="1.8" fill="#f3cf8a"/><rect x="8.5" y="29.8" width="9.2" height="6.2" rx="0.6" fill="#fff" stroke="#7fa8de" stroke-width="1.1"/><path d="M13.1 36 V38 M10.9 38.4 H15.3" stroke="#7fa8de" stroke-width="0.9"/>
<rect x="21.599999999999998" y="20.7" width="16.2" height="16.4" rx="0.8" fill="#fff" stroke="#c2c2c2" stroke-width="0.9"/><path d="M22.8 36 L26.799999999999997 29.4 L28.799999999999997 29.4 L31.799999999999997 36 Z" fill="#dbe6f4"/><circle cx="33.4" cy="24.8" r="1.8" fill="#f3cf8a"/><circle cx="34.2" cy="33.2" r="3.9" fill="#eaf1fb" stroke="#7fa8de" stroke-width="0.8"/><path d="M30.300000000000004 33.2 H38.1 M34.2 29.300000000000004 V37.1 M31.000000000000004 31.200000000000003 H37.400000000000006 M31.000000000000004 35.2 H37.400000000000006" stroke="#7fa8de" stroke-width="0.55"/><ellipse cx="34.2" cy="33.2" rx="1.8" ry="3.9" fill="none" stroke="#7fa8de" stroke-width="0.55"/>
<rect x="43.8" y="22.2" width="13.2" height="13.2" fill="#fff" stroke="#b0b0b0" stroke-width="0.8"/><path d="M44.4 23.8 H56.6 M44.4 33.8 H56.6" stroke="#9a9a9a" stroke-width="1.5" stroke-dasharray="1.3 1.1"/><circle cx="55.8" cy="33.4" r="3.9" fill="#eaf1fb" stroke="#7fa8de" stroke-width="0.8"/><path d="M51.9 33.4 H59.699999999999996 M55.8 29.5 V37.3 M52.599999999999994 31.4 H59.0 M52.599999999999994 35.4 H59.0" stroke="#7fa8de" stroke-width="0.55"/><ellipse cx="55.8" cy="33.4" rx="1.8" ry="3.9" fill="none" stroke="#7fa8de" stroke-width="0.55"/></g></svg>
<svg class="a" style="left:523.5px;top:321.2px" width="62" height="40" viewBox="0 0 62 40"><g opacity="0.95">
<rect x="0.4" y="0.4" width="16.4" height="14.4" rx="0.8" fill="#fff" stroke="#c2c2c2" stroke-width="0.9"/><rect x="0.4" y="0.4" width="16.4" height="2.7" fill="#8f8f8f"/><path d="M0.4 6.2 H16.8 M0.4 9.1 H16.8 M0.4 12 H16.8 M5.8 3 V14.8 M11.3 3 V14.8" stroke="#d0d0d0" stroke-width="0.7"/>
<rect x="22.5" y="4.8" width="3.9" height="10" fill="#8eb0dd" stroke="#6f97cf" stroke-width="0.5"/><rect x="27.3" y="0.3" width="3.9" height="14.5" fill="#f5e0a3" stroke="#ecd08a" stroke-width="0.5"/><rect x="32" y="2.9" width="3.9" height="11.9" fill="#a9a9a9" stroke="#8f8f8f" stroke-width="0.5"/>
<path d="M42.2 0.9 H54 L57 5.7 L54 10.4 H42.2 L45 5.7 Z" fill="#a9cdbc"/><rect x="47.3" y="4.9" width="12.4" height="9.7" rx="1.4" fill="#fff" stroke="#b5b5b5" stroke-width="0.9"/><rect x="49.4" y="7" width="8.2" height="5.4" fill="#ededed"/><path d="M52.2 7 V12.4 M54.9 7 V12.4 M49.4 9.7 H57.6" stroke="#fff" stroke-width="0.5"/>
<rect x="0.4" y="20.7" width="16.2" height="16.4" rx="0.8" fill="#fff" stroke="#c2c2c2" stroke-width="0.9"/><path d="M1.6 36 L5.6 29.4 L7.6 29.4 L10.6 36 Z" fill="#dbe6f4"/><circle cx="12.2" cy="24.8" r="1.8" fill="#f3cf8a"/><rect x="8.5" y="29.8" width="9.2" height="6.2" rx="0.6" fill="#fff" stroke="#7fa8de" stroke-width="1.1"/><path d="M13.1 36 V38 M10.9 38.4 H15.3" stroke="#7fa8de" stroke-width="0.9"/>
<rect x="21.599999999999998" y="20.7" width="16.2" height="16.4" rx="0.8" fill="#fff" stroke="#c2c2c2" stroke-width="0.9"/><path d="M22.8 36 L26.799999999999997 29.4 L28.799999999999997 29.4 L31.799999999999997 36 Z" fill="#dbe6f4"/><circle cx="33.4" cy="24.8" r="1.8" fill="#f3cf8a"/><circle cx="34.2" cy="33.2" r="3.9" fill="#eaf1fb" stroke="#7fa8de" stroke-width="0.8"/><path d="M30.300000000000004 33.2 H38.1 M34.2 29.300000000000004 V37.1 M31.000000000000004 31.200000000000003 H37.400000000000006 M31.000000000000004 35.2 H37.400000000000006" stroke="#7fa8de" stroke-width="0.55"/><ellipse cx="34.2" cy="33.2" rx="1.8" ry="3.9" fill="none" stroke="#7fa8de" stroke-width="0.55"/>
<rect x="43.8" y="22.2" width="13.2" height="13.2" fill="#fff" stroke="#b0b0b0" stroke-width="0.8"/><path d="M44.4 23.8 H56.6 M44.4 33.8 H56.6" stroke="#9a9a9a" stroke-width="1.5" stroke-dasharray="1.3 1.1"/><circle cx="55.8" cy="33.4" r="3.9" fill="#eaf1fb" stroke="#7fa8de" stroke-width="0.8"/><path d="M51.9 33.4 H59.699999999999996 M55.8 29.5 V37.3 M52.599999999999994 31.4 H59.0 M52.599999999999994 35.4 H59.0" stroke="#7fa8de" stroke-width="0.55"/><ellipse cx="55.8" cy="33.4" rx="1.8" ry="3.9" fill="none" stroke="#7fa8de" stroke-width="0.55"/></g></svg>
<div class="a" style="left:790.4px;top:162px;width:9.6px;height:257px;background:#cfcfcf;"></div>
<div class="a" style="left:790.6px;top:163.4px;width:8px;height:8.4px;background:#fff;border:1px solid #ababab"></div>
<svg class="a" style="left:792.2px;top:166px" width="5" height="3" viewBox="0 0 5 3"><path d="M0.4 2.6 L2.4 0.4 L4.4 2.6 Z" fill="#555"/></svg>
<div class="a" style="left:790.6px;top:181.4px;width:8px;height:10.2px;background:#fff;border:1px solid #ababab"></div>
<div class="a" style="left:790.6px;top:418.6px;width:8px;height:8px;background:#fff;border:1px solid #ababab"></div>
<svg class="a" style="left:792.2px;top:421.4px" width="5" height="3" viewBox="0 0 5 3"><path d="M0.4 0.4 L2.4 2.6 L4.4 0.4 Z" fill="#555"/></svg>
<svg class="a" style="left:792px;top:429.6px" width="6" height="6" viewBox="0 0 6 6"><path d="M0.8 2.8 L2.8 0.8 L4.8 2.8 M0.8 5.2 L2.8 3.2 L4.8 5.2" fill="none" stroke="#555" stroke-width="0.9"/></svg>
<svg class="a" style="left:792px;top:439.6px" width="6" height="6" viewBox="0 0 6 6"><path d="M0.8 0.8 L2.8 2.8 L4.8 0.8 M0.8 3.2 L2.8 5.2 L4.8 3.2" fill="none" stroke="#555" stroke-width="0.9"/></svg>
<div class="a" style="left:144px;top:459px;width:656px;height:1px;background:#cdcdcd;"></div>
<div class="t" style="left:150.00px;top:464.85px;font-size:9.8px;color:#4a4a4a;font-family:'Liberation Sans',sans-serif;transform:scaleX(0.8614);">Haga clic para agregar notas</div>
<div class="a" style="left:0px;top:487.2px;width:800px;height:12.8px;background:#f3f3f3;"></div>
<div class="a" style="left:0px;top:486.4px;width:800px;height:0.9px;background:#dcdcdc;"></div>
<div class="t" style="left:4.00px;top:490.51px;font-size:7.6px;color:#4d4d4d;font-family:'Liberation Sans',sans-serif;transform:scaleX(0.8818);">Diapositiva 3 de 50</div>
<svg class="a" style="left:72px;top:490px" width="9" height="8" viewBox="0 0 9 8"><path d="M0.5 0.8 H3.6 Q4.4 0.8 4.4 1.6 V7 Q4.4 6.2 3.6 6.2 H0.5 Z M8.3 3 V6.2 H5.2 Q4.4 6.2 4.4 7" fill="none" stroke="#666" stroke-width="0.8"/><path d="M5.4 4.4 L6.4 5.4 L8.6 2" fill="none" stroke="#666" stroke-width="0.8"/></svg>
<div class="t" style="left:90.40px;top:490.51px;font-size:7.6px;color:#4d4d4d;font-family:'Liberation Sans',sans-serif;transform:scaleX(0.8750);">Inglés (Estados Unidos)</div>
<svg class="a" style="left:496px;top:490.6px" width="8" height="7" viewBox="0 0 8 7"><path d="M0.5 4.6 H7 M0.5 2.6 H7 M0.5 0.6 H7" stroke="#666" stroke-width="0.8"/><path d="M2 6.6 L3.6 5 L5.2 6.6" fill="none" stroke="#666" stroke-width="0.8"/></svg>
<div class="t" style="left:505.60px;top:490.51px;font-size:7.6px;color:#4d4d4d;font-family:'Liberation Sans',sans-serif;transform:scaleX(0.8563);">Notas</div>
<svg class="a" style="left:535.6px;top:490.4px" width="8" height="8" viewBox="0 0 8 8"><path d="M0.4 0.4 H7 V5 H3.6 L2 6.8 V5 H0.4 Z" fill="#555"/></svg>
<div class="t" style="left:545.00px;top:490.51px;font-size:7.6px;color:#4d4d4d;font-family:'Liberation Sans',sans-serif;transform:scaleX(0.8727);">Comentarios</div>
<div class="a" style="left:593.8px;top:487.6px;width:21.8px;height:12.4px;background:#c6c6c6;"></div>
<svg class="a" style="left:600.6px;top:490.6px" width="8" height="7" viewBox="0 0 8 7"><rect x="0.5" y="0.5" width="7" height="6" fill="none" stroke="#555" stroke-width="0.8"/><path d="M2.6 0.5 V6.5 M2.6 3.4 H7.5" stroke="#555" stroke-width="0.7"/></svg>
<svg class="a" style="left:623.6px;top:490.4px" width="8" height="8" viewBox="0 0 8 8"><rect x="0.5" y="0.5" width="2.6" height="2.4" fill="none" stroke="#666" stroke-width="0.8"/><rect x="4.9" y="0.5" width="2.6" height="2.4" fill="none" stroke="#666" stroke-width="0.8"/><rect x="0.5" y="4.7" width="2.6" height="2.4" fill="none" stroke="#666" stroke-width="0.8"/><rect x="4.9" y="4.7" width="2.6" height="2.4" fill="none" stroke="#666" stroke-width="0.8"/></svg>
<svg class="a" style="left:645px;top:490.4px" width="8" height="8" viewBox="0 0 8 8"><path d="M4 1.2 V7 M4 1.2 Q2.4 0 0.5 0.8 V6.6 Q2.4 5.8 4 7 Q5.6 5.8 7.5 6.6 V0.8 Q5.6 0 4 1.2" fill="none" stroke="#666" stroke-width="0.8"/></svg>
<svg class="a" style="left:667.6px;top:490.4px" width="8" height="8" viewBox="0 0 8 8"><path d="M0.4 0.6 H7.6 M1.2 0.6 V2.6 Q4 5.6 6.8 2.6 V0.6 M4 4.6 V6.8 M2.4 7.2 H5.6" fill="none" stroke="#666" stroke-width="0.8"/></svg>
<div class="a" style="left:686.4px;top:493.8px;width:3.4px;height:1px;background:#555;"></div>
<div class="a" style="left:692px;top:494px;width:58.6px;height:0.8px;background:#9a9a9a;"></div>
<div class="a" style="left:709.8px;top:490.6px;width:1.8px;height:7.4px;background:#444;"></div>
<div class="a" style="left:721px;top:492.8px;width:0.8px;height:3.2px;background:#9a9a9a;"></div>
<svg class="a" style="left:752.6px;top:491.8px" width="5" height="5" viewBox="0 0 5 5"><path d="M0 2.5 H5 M2.5 0 V5" stroke="#555" stroke-width="1"/></svg>
<div class="t" style="left:765.60px;top:490.51px;font-size:7.6px;color:#4d4d4d;font-family:'Liberation Sans',sans-serif;transform:scaleX(0.8659);">67 %</div>
<svg class="a" style="left:788px;top:490.4px" width="8" height="8" viewBox="0 0 8 8"><rect x="0.5" y="0.5" width="7" height="7" fill="none" stroke="#666" stroke-width="0.8"/><path d="M2 3.2 V2 H3.2 M6 3.2 V2 H4.8 M2 4.8 V6 H3.2 M6 4.8 V6 H4.8" fill="none" stroke="#555" stroke-width="0.7"/></svg>
<div class="a" style="left:85.4px;top:140.3px;width:102.2px;height:219.4px;background:#fff;border:1px solid #c4c4c4;box-shadow:1.5px 1.5px 2.5px rgba(0,0,0,.2)"></div>
<div class="t" style="left:103.60px;top:143.93px;font-size:8.8px;color:#3a3a3a;font-family:'Liberation Sans',sans-serif;transform:scaleX(0.8016);">Cortar</div>
<div class="a" style="left:115.0px;top:151.6px;width:2.0px;height:0.7px;background:#3a3a3a;"></div>
<div class="t" style="left:103.60px;top:158.23px;font-size:8.8px;color:#3a3a3a;font-family:'Liberation Sans',sans-serif;transform:scaleX(0.8023);">Copiar</div>
<div class="a" style="left:103.6px;top:165.9px;width:5.1px;height:0.7px;background:#3a3a3a;"></div>
<div class="a" style="left:100.4px;top:170.4px;width:86.6px;height:11.2px;background:#ececec;"></div>
<div class="t" style="left:105.20px;top:171.83px;font-size:8.8px;color:#3a3a3a;font-family:'Liberation Sans',sans-serif;font-weight:bold;transform:scaleX(0.7510);">Opciones de pegado:</div>
<div class="t" style="left:103.60px;top:203.73px;font-size:8.8px;color:#3a3a3a;font-family:'Liberation Sans',sans-serif;transform:scaleX(0.7865);">Nueva diapositiva...</div>
<div class="a" style="left:108.6px;top:211.4px;width:3.8px;height:0.7px;background:#3a3a3a;"></div>
<div class="t" style="left:103.60px;top:217.53px;font-size:8.8px;color:#3a3a3a;font-family:'Liberation Sans',sans-serif;transform:scaleX(0.7915);">Duplicar diapositiva</div>
<div class="a" style="left:119.5px;top:225.2px;width:3.5px;height:0.7px;background:#3a3a3a;"></div>
<div class="a" style="left:84.7px;top:228.6px;width:102.7px;height:17px;background:#c6c6c6;border:3px solid #ee0a0a;box-shadow:inset 0 0 0 0.8px #cdeeee"></div>
<div class="t" style="left:103.60px;top:232.23px;font-size:8.8px;color:#222;font-family:'Liberation Sans',sans-serif;transform:scaleX(0.7967);">Eliminar diapositiva</div>
<div class="a" style="left:108.3px;top:239.9px;width:1.6px;height:0.7px;background:#222;"></div>
<div class="t" style="left:103.60px;top:246.33px;font-size:8.8px;color:#b4b4b4;font-family:'Liberation Sans',sans-serif;transform:scaleX(0.7800);">Agregar sección</div>
<div class="a" style="left:103.6px;top:254.0px;width:4.6px;height:0.7px;background:#b4b4b4;"></div>
<div class="a" style="left:102.8px;top:257.2px;width:84px;height:0.8px;background:#e2e2e2;"></div>
<div class="t" style="left:103.60px;top:261.33px;font-size:8.8px;color:#3a3a3a;font-family:'Liberation Sans',sans-serif;transform:scaleX(0.7903);">Publicar diapositivas</div>
<div class="a" style="left:147.7px;top:269.0px;width:3.5px;height:0.7px;background:#3a3a3a;"></div>
<div class="t" style="left:103.60px;top:275.73px;font-size:8.8px;color:#b4b4b4;font-family:'Liberation Sans',sans-serif;transform:scaleX(0.7644);">Buscar actualizaciones</div>
<div class="a" style="left:145.9px;top:283.4px;width:3.4px;height:0.7px;background:#b4b4b4;"></div>
<div class="a" style="left:102.8px;top:287.2px;width:84px;height:0.8px;background:#e2e2e2;"></div>
<div class="t" style="left:103.60px;top:290.53px;font-size:8.8px;color:#3a3a3a;font-family:'Liberation Sans',sans-serif;transform:scaleX(0.7593);">Diseño</div>
<div class="a" style="left:117.0px;top:298.2px;width:3.7px;height:0.7px;background:#3a3a3a;"></div>
<div class="t" style="left:103.60px;top:304.53px;font-size:8.8px;color:#3a3a3a;font-family:'Liberation Sans',sans-serif;transform:scaleX(0.7694);">Restablecer diapositiva</div>
<div class="a" style="left:121.3px;top:312.2px;width:3.8px;height:0.7px;background:#3a3a3a;"></div>
<div class="t" style="left:103.60px;top:318.53px;font-size:8.8px;color:#3a3a3a;font-family:'Liberation Sans',sans-serif;transform:scaleX(0.8050);">Formato del fondo...</div>
<div class="a" style="left:103.6px;top:326.2px;width:4.3px;height:0.7px;background:#3a3a3a;"></div>
<div class="a" style="left:102.8px;top:330px;width:84px;height:0.8px;background:#e2e2e2;"></div>
<div class="t" style="left:103.60px;top:333.73px;font-size:8.8px;color:#b4b4b4;font-family:'Liberation Sans',sans-serif;transform:scaleX(0.8056);">Álbum de fotos...</div>
<div class="a" style="left:117.8px;top:341.4px;width:5.9px;height:0.7px;background:#b4b4b4;"></div>
<div class="t" style="left:103.60px;top:348.23px;font-size:8.8px;color:#3a3a3a;font-family:'Liberation Sans',sans-serif;transform:scaleX(0.8012);">Ocultar diapositiva</div>
<div class="a" style="left:116.5px;top:355.9px;width:1.6px;height:0.7px;background:#3a3a3a;"></div>
<svg class="a" style="left:179.4px;top:277.6px" width="4" height="5" viewBox="0 0 4 5"><path d="M0.8 0.6 L2.8 2.5 L0.8 4.4" fill="none" stroke="#b4b4b4" stroke-width="0.9"/></svg>
<svg class="a" style="left:179.6px;top:292.4px" width="4" height="5" viewBox="0 0 4 5"><path d="M0.6 0.4 L3 2.5 L0.6 4.6 Z" fill="#444"/></svg>
<svg class="a" style="left:88.4px;top:143.2px" width="9" height="10" viewBox="0 0 9 10"><path d="M1.8 0.4 L6 6.4 M7.2 0.4 L3 6.4" stroke="#555" stroke-width="1" fill="none"/><circle cx="2" cy="7.8" r="1.6" fill="none" stroke="#3e6db5" stroke-width="1"/><circle cx="7" cy="7.8" r="1.6" fill="none" stroke="#3e6db5" stroke-width="1"/></svg>
<svg class="a" style="left:88.2px;top:157.6px" width="10" height="10" viewBox="0 0 10 10"><path d="M0.6 0.6 H4.4 L5.8 2 V6.6 H0.6 Z" fill="#fff" stroke="#808080" stroke-width="0.9"/><path d="M3.6 3 H7.4 L8.8 4.4 V9.2 H3.6 Z" fill="#fff" stroke="#808080" stroke-width="0.9"/><path d="M4.8 5.6 H7.6 M4.8 7.2 H7.6" stroke="#3e6db5" stroke-width="0.8"/></svg>
<svg class="a" style="left:88.2px;top:171px" width="10" height="11" viewBox="0 0 10 11"><rect x="0.6" y="1.8" width="7" height="8.4" rx="0.6" fill="#ecc169"/><rect x="2.2" y="0.4" width="3.8" height="2.4" rx="0.6" fill="#666"/><path d="M4.4 5 H7.6 L9.4 6.8 V10.6 H4.4 Z" fill="#fff" stroke="#808080" stroke-width="0.8"/></svg>
<svg class="a" style="left:103px;top:184.4px" width="13" height="15" viewBox="0 0 13 15"><path d="M0.9 2.2 H10.3 V13 H0.9 Z" fill="#fff" stroke="#e6b25a" stroke-width="1.7"/><path d="M3.4 2.8 L4.4 0.9 Q5.6 -0.2 6.8 0.9 L7.8 2.8 Z" fill="#555"/><rect x="2.6" y="3.8" width="8.6" height="9.4" fill="#fff"/><path d="M3.4 5.2 H9.4 M3.4 7 H9.4 M3.4 8.8 H7 M3.4 10.6 H6.6" stroke="#8db2e3" stroke-width="0.9"/><rect x="7.2" y="8" width="4.6" height="6" fill="#fff"/><text x="7.6" y="12" font-size="5.4" font-weight="bold" font-family="Liberation Sans" fill="#333">a</text><circle cx="7.6" cy="13.5" r="0.9" fill="#e03c31"/><circle cx="9.7" cy="13.5" r="0.9" fill="#3e9a4a"/><circle cx="11.8" cy="13.5" r="0.9" fill="#e8602c"/></svg>
<svg class="a" style="left:121px;top:184.4px" width="13" height="15" viewBox="0 0 13 15"><path d="M0.9 2.2 H10.3 V13 H0.9 Z" fill="#fff" stroke="#e6b25a" stroke-width="1.7"/><path d="M3.4 2.8 L4.4 0.9 Q5.6 -0.2 6.8 0.9 L7.8 2.8 Z" fill="#555"/><rect x="2.4" y="3.8" width="7" height="8.4" fill="#fff"/><path d="M3 5.4 H8.2" stroke="#e58a6a" stroke-width="1"/><path d="M3 7.2 H7.6 M3 9 H6.6" stroke="#8db2e3" stroke-width="0.9"/><path d="M12.6 4.6 L9.2 9.8 L8 9 L11.6 3.8 Z" fill="#3a3a3a"/><path d="M8 9.2 L9.2 10 Q8.6 11.8 7 12.2 Z" fill="#666"/><path d="M2.2 13.6 Q4.6 10.2 7.6 12.2 L7.2 13.8 Z" fill="#3e6db5"/><rect x="9" y="10.6" width="3" height="4" fill="#fff"/></svg>
<svg class="a" style="left:138.2px;top:184.4px" width="13" height="15" viewBox="0 0 13 15"><path d="M0.9 2.2 H10.3 V13 H0.9 Z" fill="#fff" stroke="#e6b25a" stroke-width="1.7"/><path d="M3.4 2.8 L4.4 0.9 Q5.6 -0.2 6.8 0.9 L7.8 2.8 Z" fill="#555"/><rect x="5.4" y="5.6" width="8" height="9" fill="#fff"/><text x="5.8" y="13.6" font-size="9.6" font-family="Liberation Sans" fill="#222">A</text></svg>
<div class="a" style="left:104px;top:200.2px;width:83px;height:0.8px;background:#e4e4e4;"></div>
<svg class="a" style="left:88px;top:203.2px" width="10" height="10" viewBox="0 0 10 10"><g opacity="1"><rect x="1.4" y="1.8" width="8" height="7.4" fill="#fff" stroke="#808080" stroke-width="0.9"/><path d="M1.4 4.6 H9.4 M1.4 6.8 H9.4" stroke="#bdbdbd" stroke-width="0.8"/><path d="M2.4 0 V4.8 M0 2.4 H4.8 M0.7 0.7 L4.1 4.1 M4.1 0.7 L0.7 4.1" stroke="#efb73e" stroke-width="0.8"/></g></svg>
<svg class="a" style="left:88px;top:217px" width="10" height="10" viewBox="0 0 10 10"><rect x="1" y="3.4" width="5.6" height="5" fill="#fff" stroke="#808080" stroke-width="0.8"/><rect x="3.6" y="1.6" width="5.8" height="5" fill="#fff" stroke="#808080" stroke-width="0.8"/><path d="M2.2 0 V4.4 M0 2.2 H4.4 M0.6 0.6 L3.8 3.8 M3.8 0.6 L0.6 3.8" stroke="#efb73e" stroke-width="0.7"/></svg>
<svg class="a" style="left:88.4px;top:232px" width="10" height="10" viewBox="0 0 10 10"><rect x="0.8" y="0.8" width="8" height="6.4" fill="#ddd" stroke="#808080" stroke-width="0.8"/><path d="M3 4.2 L8.6 9.4 M8.6 4.2 L3 9.4" stroke="#e04f2e" stroke-width="1.2"/></svg>
<svg class="a" style="left:88px;top:245.4px" width="10" height="10" viewBox="0 0 10 10"><g opacity="0.55"><rect x="2.6" y="3.6" width="6.6" height="5.6" fill="#fff" stroke="#aaa" stroke-width="0.8"/><path d="M2.6 1.4 H9.2 M2.6 2.6 H9.2" stroke="#b5b5b5" stroke-width="0.7"/><path d="M2 0 V4 M0 2 H4 M0.6 0.6 L3.4 3.4 M3.4 0.6 L0.6 3.4" stroke="#e8d9b2" stroke-width="0.7"/></g></svg>
<svg class="a" style="left:88.4px;top:260.6px" width="10" height="10" viewBox="0 0 10 10"><rect x="0.6" y="0.6" width="8" height="7.4" fill="#fff" stroke="#808080" stroke-width="0.9"/><path d="M0.6 2.4 H8.6" stroke="#808080" stroke-width="0.8"/><circle cx="7" cy="7" r="2.6" fill="#3e6db5"/><path d="M5.8 7 H8.2 M7 5.8 V8.2" stroke="#fff" stroke-width="0.7"/></svg>
<svg class="a" style="left:88.2px;top:290px" width="10" height="9" viewBox="0 0 10 9"><rect x="0.5" y="0.5" width="9" height="8" fill="#fff" stroke="#808080" stroke-width="0.9"/><path d="M3.4 0.5 V8.5 M3.4 3.2 H9.5" stroke="#999" stroke-width="0.8"/><rect x="1.2" y="1.4" width="1.6" height="6.2" fill="#c9c9c9"/></svg>
<svg class="a" style="left:88px;top:304px" width="10" height="9" viewBox="0 0 10 9"><rect x="2.4" y="2.8" width="7" height="5.8" fill="#fff" stroke="#808080" stroke-width="0.9"/><path d="M0.8 4.6 A3.2 3.2 0 0 1 6.4 2" fill="none" stroke="#3e6db5" stroke-width="1.1"/><path d="M0 2.4 L0.8 5.2 L3.4 4 Z" fill="#3e6db5"/></svg>
<svg class="a" style="left:88px;top:317.4px" width="10" height="11" viewBox="0 0 10 11"><path d="M3.4 1.6 L8 4.4 L5.2 9.4 L0.8 6.6 Z" fill="#fff" stroke="#808080" stroke-width="0.9"/><path d="M2.6 0.4 Q5 0.4 4.6 4" fill="none" stroke="#808080" stroke-width="0.8"/><path d="M8.4 6.4 Q9.8 8.6 8.4 9.4 Q7 8.6 8.4 6.4 Z" fill="#3e6db5"/></svg>
<svg class="a" style="left:88px;top:333px" width="10" height="10" viewBox="0 0 10 10"><g opacity="0.6"><rect x="0.6" y="1" width="6.4" height="5.6" fill="#fff" stroke="#aaa" stroke-width="0.8" stroke-dasharray="1.2 0.8"/><rect x="3" y="3.6" width="6.4" height="5.6" fill="#fff" stroke="#aaa" stroke-width="0.8" stroke-dasharray="1.2 0.8"/><path d="M3.6 8.4 L5.6 5.8 L7 7.4 L8.8 8.6" fill="none" stroke="#b9b9b9" stroke-width="0.8"/></g></svg>
<svg class="a" style="left:88px;top:347.4px" width="10" height="10" viewBox="0 0 10 10"><rect x="0.6" y="2.2" width="8" height="6.4" fill="#fff" stroke="#808080" stroke-width="0.8"/><path d="M1.6 7.6 L4.4 4.4 L6 6.2 L7.8 4" fill="none" stroke="#9a9a9a" stroke-width="0.7"/><path d="M0.4 9.6 L9.6 0.4" stroke="#3e6db5" stroke-width="1.2"/></svg>
<svg class="a" style="left:189.2px;top:215px" width="58" height="42" viewBox="0 0 58 42"><path d="M2.5 20.8 L29.6 2.9 Q30.4 2.6 30.4 3.6 V10.6 H53.2 Q55.3 10.6 55.3 12.8 V30.4 H30.4 V38.2 Q30.4 39.4 29.4 38.9 Z" fill="#ed1c24" stroke="#e4f3f3" stroke-width="1" stroke-linejoin="round"/></svg>
</div>
</body>
</html>
